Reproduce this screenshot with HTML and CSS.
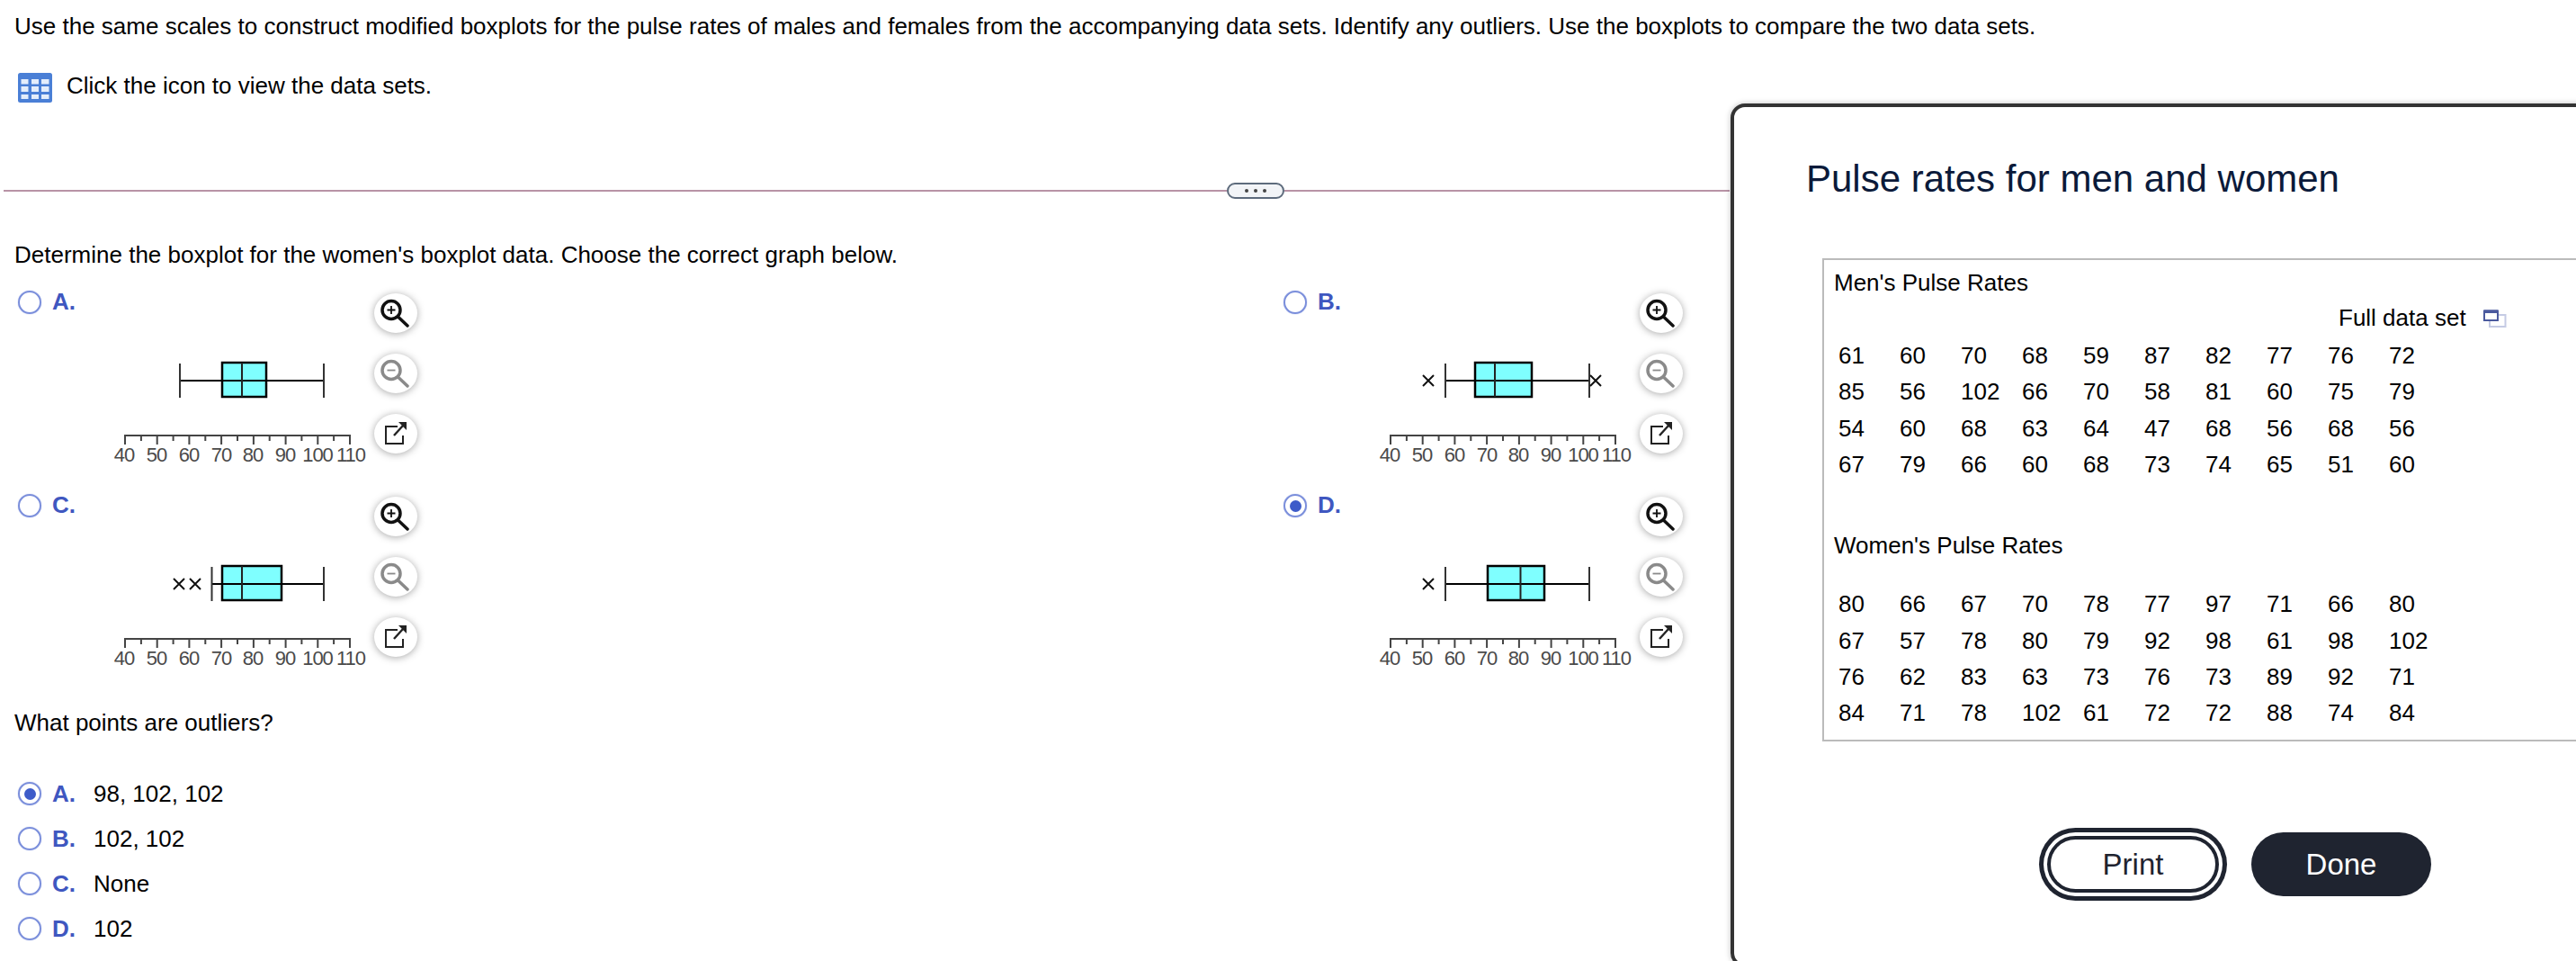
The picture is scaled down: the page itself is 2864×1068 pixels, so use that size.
FILE: index.html
```html
<!DOCTYPE html>
<html lang="en">
<head>
<meta charset="UTF-8">
<meta name="viewport" content="width=device-width, initial-scale=1.0">
<title>Pulse rates boxplots</title>
<link rel="stylesheet" href="styles.css">
</head>
<body>

<svg class="defs">
  <symbol id="axis" viewBox="0 0 290 140">
    <path class="axis-line" d="M13 104V94H263V104M48.7 94V104M84.4 94V104M120.1 94V104M155.9 94V104M191.6 94V104M227.3 94V104M30.9 94V100M66.6 94V100M102.3 94V100M138 94V100M173.7 94V100M209.4 94V100M245.1 94V100"/>
  </symbol>
  <symbol id="zoom-in" viewBox="0 0 48 44">
    <circle cx="19" cy="18.5" r="10" fill="none" stroke="#111" stroke-width="3.5"/>
    <path d="M14.5 18.5H23.5M19 14V23" stroke="#111" stroke-width="1.8" fill="none"/>
    <path d="M27 26.5L37 36" stroke="#111" stroke-width="3.5" stroke-linecap="round"/>
  </symbol>
  <symbol id="zoom-out" viewBox="0 0 48 44">
    <circle cx="19" cy="18.5" r="10" fill="none" stroke="#8a8a8a" stroke-width="3.5"/>
    <path d="M14.5 18.5H23.5" stroke="#8a8a8a" stroke-width="1.8" fill="none"/>
    <path d="M27 26.5L37 36" stroke="#8a8a8a" stroke-width="3.5" stroke-linecap="round"/>
  </symbol>
  <symbol id="popout" viewBox="0 0 48 44">
    <path d="M26 14H13V33H32V24" fill="none" stroke="#222" stroke-width="2"/>
    <path d="M22 24L32 13" stroke="#222" stroke-width="2.4"/>
    <path d="M27 9H36V18Z" fill="#222"/>
  </symbol>
</svg>

<div class="question">
  <p class="text">Use the same scales to construct modified boxplots for the pulse rates of males and females from the accompanying data sets. Identify any outliers. Use the boxplots to compare the two data sets.</p>
  <div class="data-link">
    <svg class="table-icon" viewBox="0 0 38 33">
      <rect width="38" height="33" rx="2.5" fill="#4a7fd6"/>
      <g fill="#e4edfb">
        <rect x="3.5" y="7" width="8" height="5.5"/><rect x="15" y="7" width="8" height="5.5"/><rect x="26" y="7" width="8.5" height="5.5"/>
        <rect x="3.5" y="15" width="8" height="6"/><rect x="15" y="15" width="8" height="6"/><rect x="26" y="15" width="8.5" height="6"/>
        <rect x="3.5" y="24" width="8" height="5"/><rect x="15" y="24" width="8" height="5"/><rect x="26" y="24" width="8.5" height="5"/>
      </g>
    </svg>
    <span class="text">Click the icon to view the data sets.</span>
  </div>
</div>

<div class="divider">
  <div class="divider-line first"></div>
  <div class="pill"><i></i><i></i><i></i></div>
  <div class="divider-line"></div>
</div>

<p class="text prompt">Determine the boxplot for the women's boxplot data. Choose the correct graph below.</p>

<div class="options">

  <div class="option">
    <span class="radio"></span>
    <span class="letter">A.</span>
    <svg class="chart" viewBox="0 0 290 140">
      <use href="#axis"/>
      <rect class="box" x="121" y="13" width="49" height="38"/>
      <path class="whisker" d="M74 33H234"/>
      <path class="cap" d="M74 14V52M234 14V52"/>
      <path class="median" d="M143 13V51"/>
      <g class="ticks"><text x="12" y="123">40</text><text x="48" y="123">50</text><text x="84" y="123">60</text><text x="120" y="123">70</text><text x="155" y="123">80</text><text x="191" y="123">90</text><text x="227" y="123">100</text><text x="264" y="123">110</text></g>
    </svg>
    <div class="tools">
      <span class="tool"><svg><use href="#zoom-in"/></svg></span>
      <span class="tool"><svg><use href="#zoom-out"/></svg></span>
      <span class="tool"><svg><use href="#popout"/></svg></span>
    </div>
  </div>

  <div class="option">
    <span class="radio"></span>
    <span class="letter">B.</span>
    <svg class="chart" viewBox="0 0 290 140">
      <use href="#axis"/>
      <rect class="box" x="107" y="13" width="63" height="38"/>
      <path class="whisker" d="M74 33H234"/>
      <path class="cap" d="M74 14V52M234 14V52"/>
      <path class="median" d="M129 13V51"/>
      <path class="outlier" d="M49 27L61 39M61 27L49 39M235 27L247 39M247 27L235 39"/>
      <g class="ticks"><text x="12" y="123">40</text><text x="48" y="123">50</text><text x="84" y="123">60</text><text x="120" y="123">70</text><text x="155" y="123">80</text><text x="191" y="123">90</text><text x="227" y="123">100</text><text x="264" y="123">110</text></g>
    </svg>
    <div class="tools">
      <span class="tool"><svg><use href="#zoom-in"/></svg></span>
      <span class="tool"><svg><use href="#zoom-out"/></svg></span>
      <span class="tool"><svg><use href="#popout"/></svg></span>
    </div>
  </div>

  <div class="option">
    <span class="radio"></span>
    <span class="letter">C.</span>
    <svg class="chart" viewBox="0 0 290 140">
      <use href="#axis"/>
      <rect class="box" x="121" y="13" width="66" height="38"/>
      <path class="whisker" d="M109.5 33H234"/>
      <path class="cap" d="M109.5 14V52M234 14V52"/>
      <path class="median" d="M143 13V51"/>
      <path class="outlier" d="M67 27L79 39M79 27L67 39M85 27L97 39M97 27L85 39"/>
      <g class="ticks"><text x="12" y="123">40</text><text x="48" y="123">50</text><text x="84" y="123">60</text><text x="120" y="123">70</text><text x="155" y="123">80</text><text x="191" y="123">90</text><text x="227" y="123">100</text><text x="264" y="123">110</text></g>
    </svg>
    <div class="tools">
      <span class="tool"><svg><use href="#zoom-in"/></svg></span>
      <span class="tool"><svg><use href="#zoom-out"/></svg></span>
      <span class="tool"><svg><use href="#popout"/></svg></span>
    </div>
  </div>

  <div class="option">
    <span class="radio checked"></span>
    <span class="letter">D.</span>
    <svg class="chart" viewBox="0 0 290 140">
      <use href="#axis"/>
      <rect class="box" x="121" y="13" width="63" height="38"/>
      <path class="whisker" d="M74 33H234"/>
      <path class="cap" d="M74 14V52M234 14V52"/>
      <path class="median" d="M157.5 13V51"/>
      <path class="outlier" d="M49 27L61 39M61 27L49 39"/>
      <g class="ticks"><text x="12" y="123">40</text><text x="48" y="123">50</text><text x="84" y="123">60</text><text x="120" y="123">70</text><text x="155" y="123">80</text><text x="191" y="123">90</text><text x="227" y="123">100</text><text x="264" y="123">110</text></g>
    </svg>
    <div class="tools">
      <span class="tool"><svg><use href="#zoom-in"/></svg></span>
      <span class="tool"><svg><use href="#zoom-out"/></svg></span>
      <span class="tool"><svg><use href="#popout"/></svg></span>
    </div>
  </div>

</div>

<p class="text followup">What points are outliers?</p>

<div class="answers">
  <div class="answer"><span class="radio checked"></span><span class="letter">A.</span><span class="text">98, 102, 102</span></div>
  <div class="answer"><span class="radio"></span><span class="letter">B.</span><span class="text">102, 102</span></div>
  <div class="answer"><span class="radio"></span><span class="letter">C.</span><span class="text">None</span></div>
  <div class="answer"><span class="radio"></span><span class="letter">D.</span><span class="text">102</span></div>
</div>

<div class="dialog">
  <h2 class="dialog-title">Pulse rates for men and women</h2>
  <div class="data-box">
    <div class="text">Men's Pulse Rates</div>
    <div class="full-set">
      <span class="text">Full data set</span>
      <svg class="copy-icon" viewBox="0 0 26 20">
        <rect x="7" y="6" width="17.5" height="13" fill="#fff" stroke="#c5cbe4" stroke-width="2"/>
        <rect x="1" y="1.5" width="15" height="10.5" fill="#fff" stroke="#4b5a9e" stroke-width="2"/>
        <rect x="1" y="0.5" width="15" height="3.5" fill="#4b5a9e"/>
      </svg>
    </div>
    <div class="rates men">
      <span>61</span><span>60</span><span>70</span><span>68</span><span>59</span><span>87</span><span>82</span><span>77</span><span>76</span><span>72</span>
      <span>85</span><span>56</span><span>102</span><span>66</span><span>70</span><span>58</span><span>81</span><span>60</span><span>75</span><span>79</span>
      <span>54</span><span>60</span><span>68</span><span>63</span><span>64</span><span>47</span><span>68</span><span>56</span><span>68</span><span>56</span>
      <span>67</span><span>79</span><span>66</span><span>60</span><span>68</span><span>73</span><span>74</span><span>65</span><span>51</span><span>60</span>
    </div>
    <div class="text women-title">Women's Pulse Rates</div>
    <div class="rates women">
      <span>80</span><span>66</span><span>67</span><span>70</span><span>78</span><span>77</span><span>97</span><span>71</span><span>66</span><span>80</span>
      <span>67</span><span>57</span><span>78</span><span>80</span><span>79</span><span>92</span><span>98</span><span>61</span><span>98</span><span>102</span>
      <span>76</span><span>62</span><span>83</span><span>63</span><span>73</span><span>76</span><span>73</span><span>89</span><span>92</span><span>71</span>
      <span>84</span><span>71</span><span>78</span><span>102</span><span>61</span><span>72</span><span>72</span><span>88</span><span>74</span><span>84</span>
    </div>
  </div>
  <div class="dialog-buttons">
    <button class="btn btn-print">Print</button>
    <button class="btn btn-done">Done</button>
  </div>
</div>

</body>
</html>
```

FILE: styles.css
```css
* {
  box-sizing: border-box;
}
html, body {
  height: 1068px;
  overflow: hidden;
}
body {
  margin: 0;
  position: relative;
  font-family: "Liberation Sans", Arial, sans-serif;
  background-color: #fff;
  color: #000;
}
.defs {
  display: none;
}
.text {
  margin: 0;
  font-size: 26px;
  line-height: 30px;
}
.question {
  padding: 14px 0 0 16px;
}
.data-link {
  display: flex;
  gap: 16px;
  margin: 36px 0 0 4px;
}
.table-icon {
  width: 38px;
  height: 33px;
  margin-top: 1px;
}
.divider {
  display: flex;
  align-items: center;
  width: 1919px;
  height: 18px;
  margin: 89px 0 0 4px;
}
.divider-line {
  flex: 1;
  height: 2px;
  background-color: #b893a6;
}
.divider-line.first {
  flex: 0 0 1360px;
}
.pill {
  display: flex;
  justify-content: center;
  align-items: center;
  gap: 6px;
  width: 64px;
  height: 18px;
  border: 2px solid #5d6b7c;
  border-radius: 9px;
  background-color: #f2f4f7;
}
.pill i {
  width: 4px;
  height: 4px;
  border-radius: 50%;
  background-color: #444;
}
.prompt {
  margin: 47px 0 0 16px;
}
.options {
  display: grid;
  grid-template-columns: 1407px 1407px;
  grid-auto-rows: 226px;
  margin-top: 22px;
  padding-left: 20px;
}
.option {
  display: grid;
  grid-template-columns: 38px 68px 290px 48px;
  align-items: start;
}
.option .radio {
  margin-top: 3px;
}
.radio {
  display: flex;
  justify-content: center;
  align-items: center;
  width: 26px;
  height: 26px;
  border: 2.5px solid #7a8edb;
  border-radius: 50%;
  box-shadow: 0 0 1px #7a8edb;
}
.radio.checked::after {
  content: "";
  width: 13px;
  height: 13px;
  border-radius: 50%;
  background-color: #3d5bc9;
}
.letter {
  font-size: 26px;
  line-height: 30px;
  font-weight: bold;
  color: #3f57c0;
}
.chart {
  width: 290px;
  height: 140px;
  margin-top: 70px;
}
.axis-line {
  fill: none;
  stroke: #444;
  stroke-width: 2;
}
.whisker {
  stroke: #000;
  stroke-width: 2;
}
.cap {
  stroke: #333;
  stroke-width: 2;
}
.box {
  fill: #7fffff;
  stroke: #000;
  stroke-width: 2.5;
}
.median {
  stroke: #222;
  stroke-width: 2;
}
.outlier {
  fill: none;
  stroke: #111;
  stroke-width: 2;
}
.ticks text {
  font-size: 22px;
  letter-spacing: -1px;
  fill: #4a4a4a;
  text-anchor: middle;
}
.tools {
  display: flex;
  flex-direction: column;
  gap: 23px;
  margin-top: 6px;
}
.tool {
  display: block;
  width: 48px;
  height: 44px;
  border-radius: 50%;
  background-color: #fff;
  box-shadow: 0 1px 8px rgba(0, 0, 0, 0.35);
}
.tool svg {
  display: block;
  width: 48px;
  height: 44px;
  filter: blur(0.4px);
}
.followup {
  margin: 16px 0 0 16px;
}
.answers {
  margin: 39px 0 0 20px;
}
.answer {
  display: grid;
  grid-template-columns: 38px 46px auto;
  align-items: center;
  justify-content: start;
  height: 50px;
}
.dialog {
  position: absolute;
  left: 1924px;
  top: 115px;
  width: 1100px;
  height: 960px;
  padding: 56px 0 0 0;
  border: 4px solid #333;
  border-radius: 16px;
  background-color: #fff;
  box-shadow: 0 0 6px rgba(0, 0, 0, 0.25);
}
.dialog-title {
  margin: 0 0 0 80px;
  font-size: 42px;
  line-height: 48px;
  font-weight: normal;
  color: #0b1a3a;
}
.data-box {
  height: 537px;
  margin: 64px 0 0 98px;
  padding: 10px 0 0 11px;
  border: 2px solid #bbb;
}
.full-set {
  display: flex;
  align-items: center;
  gap: 19px;
  margin: 9px 0 0 561px;
}
.copy-icon {
  width: 26px;
  height: 20px;
  margin-top: 2px;
}
.rates {
  display: grid;
  grid-template-columns: repeat(10, 68px);
  grid-auto-rows: 40.33px;
  margin-left: 5px;
  font-size: 26px;
  line-height: 40px;
}
.men {
  margin-top: 7px;
}
.women-title {
  margin-top: 55px;
}
.women {
  margin-top: 30px;
}
.dialog-buttons {
  display: flex;
  align-items: center;
  gap: 36px;
  height: 71px;
  margin: 101px 0 0 348px;
}
.btn {
  font-family: "Liberation Sans", Arial, sans-serif;
  font-size: 33px;
  border-radius: 32px;
  padding: 0;
}
.btn-print {
  width: 191px;
  height: 63px;
  border: 4px solid #1f2430;
  background-color: #fff;
  color: #1f2430;
  box-shadow: 0 0 0 4px #fff, 0 0 0 9px #1f2430;
}
.btn-done {
  width: 200px;
  height: 71px;
  border: 0;
  border-radius: 36px;
  background-color: #1f2430;
  color: #fff;
}
```
